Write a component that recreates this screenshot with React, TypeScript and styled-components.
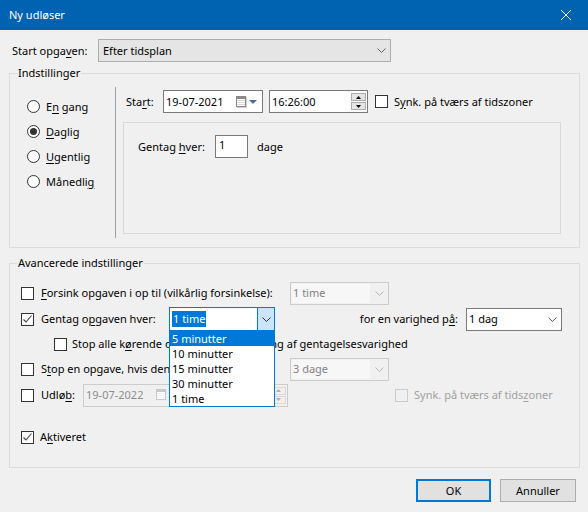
import React from 'react';
import styled, { createGlobalStyle } from 'styled-components';

const GlobalStyle = createGlobalStyle`
  html, body { margin: 0; padding: 0; background: #f0f0f0; }
  body { font-family: "Noto Sans", "Segoe UI", sans-serif; font-size: 11px; color: #000; }
  * { box-sizing: border-box; }
`;

const Window = styled.div`
  width: 588px;
  height: 512px;
  background: #f0f0f0;
  display: flex;
  flex-direction: column;
  overflow: hidden;
  line-height: 16px;
`;

const TitleBar = styled.div`
  height: 30px;
  flex-shrink: 0;
  background: #0063b1;
  color: #fff;
  display: flex;
  align-items: center;
  padding-left: 9px;
`;

const TitleText = styled.div`
  flex: 1;
`;

const CloseBtn = styled.div`
  width: 44px;
  height: 30px;
  display: flex;
  align-items: center;
  justify-content: center;
`;

const Body = styled.div`
  display: flex;
  flex-direction: column;
  padding: 9px 9px 0 9px;
`;

const TopRow = styled.div`
  display: flex;
  align-items: center;
  height: 23px;
  padding-left: 3px;
`;

const Label = styled.div<{ $w?: number; $clip?: number; $color?: string }>`
  ${(p) => (p.$w ? `width: ${p.$clip ?? p.$w}px; flex-shrink: 0;` : '')}
  ${(p) => (p.$clip && p.$w ? `overflow: hidden; margin-right: ${p.$w - p.$clip}px;` : '')}
  white-space: nowrap;
  color: ${(p) => p.$color ?? '#000'};
`;

const U = styled.span`
  text-decoration: underline;
  text-underline-offset: 2px;
`;

const Group = styled.fieldset<{ $h: number; $mt: number }>`
  margin: ${(p) => p.$mt}px 0 0 0;
  padding: 0;
  width: 571px;
  height: ${(p) => p.$h}px;
  min-width: 0;
  border: 1px solid #dcdcdc;
  flex-shrink: 0;
`;

const Legend = styled.legend`
  margin-left: 7px;
  padding: 0 1px;
  line-height: 16px;
  font-size: 11px;
`;

const GroupInner = styled.div`
  display: flex;
`;

const RadioCol = styled.div`
  width: 106px;
  height: 151px;
  margin-top: 6px;
  padding-top: 7px;
  border-right: 1px solid #a0a0a0;
  display: flex;
  flex-direction: column;
`;

const RadioRow = styled.div`
  height: 25px;
  display: flex;
  align-items: center;
  padding-left: 17px;
`;

const RadioCircle = styled.span<{ $on?: boolean }>`
  width: 13px;
  height: 13px;
  border-radius: 50%;
  border: 1px solid #333;
  background: #fff;
  margin-right: 6px;
  display: inline-flex;
  align-items: center;
  justify-content: center;
  flex-shrink: 0;
  &::after {
    content: '';
    display: ${(p) => (p.$on ? 'block' : 'none')};
    width: 7px;
    height: 7px;
    border-radius: 50%;
    background: #333;
  }
`;

const RightCol = styled.div`
  display: flex;
  flex-direction: column;
  padding-left: 10px;
`;

const StartRow = styled.div`
  display: flex;
  align-items: center;
  height: 23px;
  margin-top: 9px;
`;

const InnerPanel = styled.div`
  width: 438px;
  height: 112px;
  margin-top: 9px;
  margin-left: -3px;
  border: 1px solid #d9d9d9;
  padding: 12px 0 0 14px;
`;

const InlineRow = styled.div`
  display: flex;
  align-items: center;
  height: 23px;
`;

const TextInput = styled.div<{ $w: number }>`
  width: ${(p) => p.$w}px;
  height: 23px;
  border: 1px solid #7a7a7a;
  background: #fff;
  padding: 1px 0 0 3px;
  flex-shrink: 0;
`;

const FieldBox = styled.div<{ $w: number; $disabled?: boolean; $ml?: number }>`
  width: ${(p) => p.$w}px;
  height: 23px;
  flex-shrink: 0;
  margin-left: ${(p) => p.$ml ?? 0}px;
  border: 1px solid ${(p) => (p.$disabled ? '#cccccc' : '#7a7a7a')};
  background: ${(p) => (p.$disabled ? '#f0f0f0' : '#fff')};
  color: ${(p) => (p.$disabled ? '#8d8d8d' : '#000')};
  display: flex;
  align-items: center;
  padding-left: 2px;
`;

const FieldText = styled.span`
  flex: 1;
  white-space: nowrap;
`;

const CalWrap = styled.span`
  display: flex;
  align-items: center;
  gap: 2px;
  margin-right: 5px;
`;

const Spin = styled.div`
  display: flex;
  flex-direction: column;
  gap: 1px;
  margin-right: 1px;
`;

const SpinBtn = styled.div<{ $disabled?: boolean }>`
  width: 15px;
  height: 8px;
  border: 1px solid ${(p) => (p.$disabled ? '#d9d9d9' : '#acacac')};
  background: ${(p) => (p.$disabled ? '#f0f0f0' : '#e5e5e5')};
  display: flex;
  align-items: center;
  justify-content: center;
`;

const CheckBox = styled.span<{ $disabled?: boolean; $mr: number; $ml?: number }>`
  width: 13px;
  height: 13px;
  flex-shrink: 0;
  margin-right: ${(p) => p.$mr}px;
  margin-left: ${(p) => p.$ml ?? 0}px;
  border: 1px solid ${(p) => (p.$disabled ? '#cccccc' : '#333333')};
  background: ${(p) => (p.$disabled ? '#f0f0f0' : '#fff')};
  display: inline-flex;
  align-items: center;
  justify-content: center;
`;

type ComboVariant = 'gray' | 'white' | 'disabled' | 'focus';

const borderFor: Record<ComboVariant, string> = {
  gray: '#adadad',
  white: '#7a7a7a',
  disabled: '#cccccc',
  focus: '#0078d7',
};
const bgFor: Record<ComboVariant, string> = {
  gray: '#e5e5e5',
  white: '#ffffff',
  disabled: '#f0f0f0',
  focus: '#ffffff',
};

const ComboBox = styled.div<{ $w: number; $h?: number; $v: ComboVariant; $ml?: number }>`
  position: relative;
  width: ${(p) => p.$w}px;
  height: ${(p) => p.$h ?? 23}px;
  margin-left: ${(p) => p.$ml ?? 0}px;
  flex-shrink: 0;
  display: flex;
  align-items: stretch;
  border: 1px solid ${(p) => borderFor[p.$v]};
  background: ${(p) => bgFor[p.$v]};
  color: ${(p) => (p.$v === 'disabled' ? '#838383' : '#000')};
`;

const ComboText = styled.div<{ $v: ComboVariant }>`
  flex: 1;
  display: flex;
  align-items: center;
  padding-left: ${(p) => (p.$v === 'gray' ? 4 : p.$v === 'disabled' ? 1 : 2)}px;
  margin: ${(p) => (p.$v === 'disabled' ? '1px 1px 1px 1px' : '0')};
  background: ${(p) => (p.$v === 'disabled' ? '#f7f7f7' : 'transparent')};
  white-space: nowrap;
`;

const Selected = styled.span`
  background: #0078d7;
  color: #fff;
  padding: 0 1px;
`;

const ComboArrow = styled.div<{ $v: ComboVariant }>`
  width: 17px;
  flex-shrink: 0;
  display: flex;
  align-items: center;
  justify-content: center;
  background: ${(p) => (p.$v === 'focus' ? '#cce4f7' : 'transparent')};
  border-left: ${(p) => (p.$v === 'focus' ? '1px solid #0078d7' : 'none')};
`;

const DropList = styled.ul`
  position: absolute;
  left: -1px;
  top: 22px;
  width: 106px;
  margin: 0;
  padding: 0;
  list-style: none;
  background: #fff;
  border: 1px solid #0078d7;
  z-index: 10;
`;

const DropItem = styled.li<{ $sel?: boolean }>`
  height: 15px;
  line-height: 15px;
  padding-left: 2px;
  background: ${(p) => (p.$sel ? '#0078d7' : '#fff')};
  color: ${(p) => (p.$sel ? '#fff' : '#000')};
  white-space: nowrap;
`;

const AdvContent = styled.div`
  display: flex;
  flex-direction: column;
  padding-top: 9px;
`;

const AdvRow = styled.div<{ $h?: number; $pl?: number; $mt?: number }>`
  display: flex;
  align-items: center;
  height: ${(p) => p.$h ?? 26}px;
  padding-left: ${(p) => p.$pl ?? 11}px;
  padding-right: 17px;
  margin-top: ${(p) => p.$mt ?? 0}px;
`;

const PushRight = styled.div`
  margin-left: auto;
  margin-right: 8px;
  white-space: nowrap;
`;

const ButtonRow = styled.div`
  display: flex;
  justify-content: flex-end;
  gap: 9px;
  margin-top: 11px;
  padding-right: 3px;
`;

const Button = styled.div<{ $primary?: boolean; $w: number }>`
  width: ${(p) => p.$w}px;
  height: 23px;
  background: #e1e1e1;
  border: ${(p) => (p.$primary ? '2px solid #0078d7' : '1px solid #adadad')};
  display: flex;
  align-items: center;
  justify-content: center;
`;

const Chevron = ({ color = '#606060' }: { color?: string }) => (
  <svg width="9" height="5" viewBox="0 0 9 5">
    <path d="M0.5 0.5L4.5 4.5L8.5 0.5" fill="none" stroke={color} strokeWidth="1" />
  </svg>
);

const Check = () => (
  <svg width="11" height="11" viewBox="0 0 11 11">
    <path d="M1.5 5.5L4 8L9.5 1.5" fill="none" stroke="#444" strokeWidth="1.1" />
  </svg>
);

const Calendar = ({ disabled }: { disabled?: boolean }) => {
  const c = disabled ? '#c8c8c8' : '#8a8a8a';
  const g = disabled ? '#e2e2e2' : '#b4b4b4';
  return (
    <svg width="11" height="12" viewBox="0 0 11 12">
      <rect x="0.5" y="0.5" width="9" height="10" fill="#fff" stroke={c} />
      <rect x="1" y="1" width="8" height="2" fill={c} />
      {[4, 6, 8].map((y) =>
        [2, 4, 6, 8].map((x) => <rect key={`${x}-${y}`} x={x - 0.5} y={y} width="1" height="1" fill={g} />)
      )}
      <rect x="10" y="1" width="1" height="11" fill={disabled ? '#ececec' : '#d0d0d0'} />
      <rect x="1" y="11" width="10" height="1" fill={disabled ? '#ececec' : '#d0d0d0'} />
    </svg>
  );
};

const DownTri = ({ color = '#4e6c95' }: { color?: string }) => (
  <svg width="8" height="4" viewBox="0 0 8 4">
    <path d="M0 0H8L4 4Z" fill={color} />
  </svg>
);

const SpinArrow = ({ up, color = '#000' }: { up?: boolean; color?: string }) => (
  <svg width="5" height="3" viewBox="0 0 5 3">
    <path d={up ? 'M0 3H5L2.5 0Z' : 'M0 0H5L2.5 3Z'} fill={color} />
  </svg>
);

const Spinner = ({ disabled }: { disabled?: boolean }) => (
  <Spin>
    <SpinBtn $disabled={disabled}>
      <SpinArrow up color={disabled ? '#b0b0b0' : '#000'} />
    </SpinBtn>
    <SpinBtn $disabled={disabled}>
      <SpinArrow color={disabled ? '#b0b0b0' : '#000'} />
    </SpinBtn>
  </Spin>
);

const Combo = ({
  v,
  w,
  h,
  ml,
  children,
  open,
}: {
  v: ComboVariant;
  w: number;
  h?: number;
  ml?: number;
  children: React.ReactNode;
  open?: string[];
}) => (
  <ComboBox $v={v} $w={w} $h={h} $ml={ml}>
    <ComboText $v={v}>{children}</ComboText>
    <ComboArrow $v={v}>
      <Chevron color={v === 'disabled' ? '#b4b4b4' : v === 'focus' ? '#333' : '#606060'} />
    </ComboArrow>
    {open && (
      <DropList>
        {open.map((o, i) => (
          <DropItem key={o} $sel={i === 0}>
            {o}
          </DropItem>
        ))}
      </DropList>
    )}
  </ComboBox>
);

export default function App() {
  return (
    <>
      <GlobalStyle />
      <Window>
        <TitleBar>
          <TitleText>Ny udløser</TitleText>
          <CloseBtn>
            <svg width="10" height="10" viewBox="0 0 10 10">
              <path d="M0 0L10 10M10 0L0 10" stroke="#fff" strokeWidth="1" />
            </svg>
          </CloseBtn>
        </TitleBar>
        <Body>
          <TopRow>
            <Label $w={86}>
              Start opga<U>v</U>en:
            </Label>
            <Combo v="gray" w={293}>
              Efter tidsplan
            </Combo>
          </TopRow>

          <Group $h={183} $mt={3}>
            <Legend>Indstillinger</Legend>
            <GroupInner>
              <RadioCol>
                <RadioRow>
                  <RadioCircle />
                  <span>
                    E<U>n</U> gang
                  </span>
                </RadioRow>
                <RadioRow>
                  <RadioCircle $on />
                  <span>
                    <U>D</U>aglig
                  </span>
                </RadioRow>
                <RadioRow>
                  <RadioCircle />
                  <span>
                    <U>U</U>gentlig
                  </span>
                </RadioRow>
                <RadioRow>
                  <RadioCircle />
                  <span>
                    Månedli<U>g</U>
                  </span>
                </RadioRow>
              </RadioCol>
              <RightCol>
                <StartRow>
                  <Label $w={37}>
                    Sta<U>r</U>t:
                  </Label>
                  <FieldBox $w={100}>
                    <FieldText>19-07-2021</FieldText>
                    <CalWrap>
                      <Calendar />
                      <DownTri />
                    </CalWrap>
                  </FieldBox>
                  <FieldBox $w={99} $ml={6}>
                    <FieldText>16:26:00</FieldText>
                    <Spinner />
                  </FieldBox>
                  <CheckBox $mr={6} $ml={7} />
                  <Label>
                    S<U>y</U>nk. på tværs af tidszoner
                  </Label>
                </StartRow>
                <InnerPanel>
                  <InlineRow>
                    <Label $w={77}>
                      Gentag <U>h</U>ver:
                    </Label>
                    <TextInput $w={33}>1</TextInput>
                    <Label style={{ marginLeft: 9 }}>dage</Label>
                  </InlineRow>
                </InnerPanel>
              </RightCol>
            </GroupInner>
          </Group>

          <Group $h={213} $mt={7}>
            <Legend>Avancerede indstillinger</Legend>
            <AdvContent>
              <AdvRow>
                <CheckBox $mr={7} />
                <Label $w={249}>
                  <U>F</U>orsink opgaven i op til (vilkårlig forsinkelse):
                </Label>
                <Combo v="disabled" w={99}>
                  1 time
                </Combo>
              </AdvRow>
              <AdvRow>
                <CheckBox $mr={7}>
                  <Check />
                </CheckBox>
                <Label $w={128}>
                  Gentag o<U>p</U>gaven hver:
                </Label>
                <Combo
                  v="focus"
                  w={106}
                  h={24}
                  open={['5 minutter', '10 minutter', '15 minutter', '30 minutter', '1 time']}
                >
                  <Selected>1 time</Selected>
                </Combo>
                <PushRight>
                  for en varighed p<U>å</U>:
                </PushRight>
                <Combo v="white" w={96}>
                  1 dag
                </Combo>
              </AdvRow>
              <AdvRow $h={24} $pl={44}>
                <CheckBox $mr={5} />
                <Label>
                  Stop alle k<U>ø</U>rende opgaver ved afslutning af gentagelsesvarighed
                </Label>
              </AdvRow>
              <AdvRow>
                <CheckBox $mr={7} />
                <Label $w={249} $clip={230}>
                  S<U>t</U>op en opgave, hvis den kører i længere tid end:
                </Label>
                <Combo v="disabled" w={99}>
                  3 dage
                </Combo>
              </AdvRow>
              <AdvRow>
                <CheckBox $mr={7} />
                <Label $w={42}>
                  Udlø<U>b</U>:
                </Label>
                <FieldBox $w={100} $disabled>
                  <FieldText>19-07-2022</FieldText>
                  <CalWrap>
                    <Calendar disabled />
                    <DownTri color="#c0c0c0" />
                  </CalWrap>
                </FieldBox>
                <FieldBox $w={99} $ml={6} $disabled>
                  <FieldText>16:26:00</FieldText>
                  <Spinner disabled />
                </FieldBox>
                <CheckBox $mr={6} $ml={107} $disabled />
                <Label $color="#a0a0a0">
                  Synk. på tværs af tids<U>z</U>oner
                </Label>
              </AdvRow>
              <AdvRow $mt={16}>
                <CheckBox $mr={6}>
                  <Check />
                </CheckBox>
                <Label>
                  A<U>k</U>tiveret
                </Label>
              </AdvRow>
            </AdvContent>
          </Group>

          <ButtonRow>
            <Button $primary $w={75}>
              OK
            </Button>
            <Button $w={76}>Annuller</Button>
          </ButtonRow>
        </Body>
      </Window>
    </>
  );
}
